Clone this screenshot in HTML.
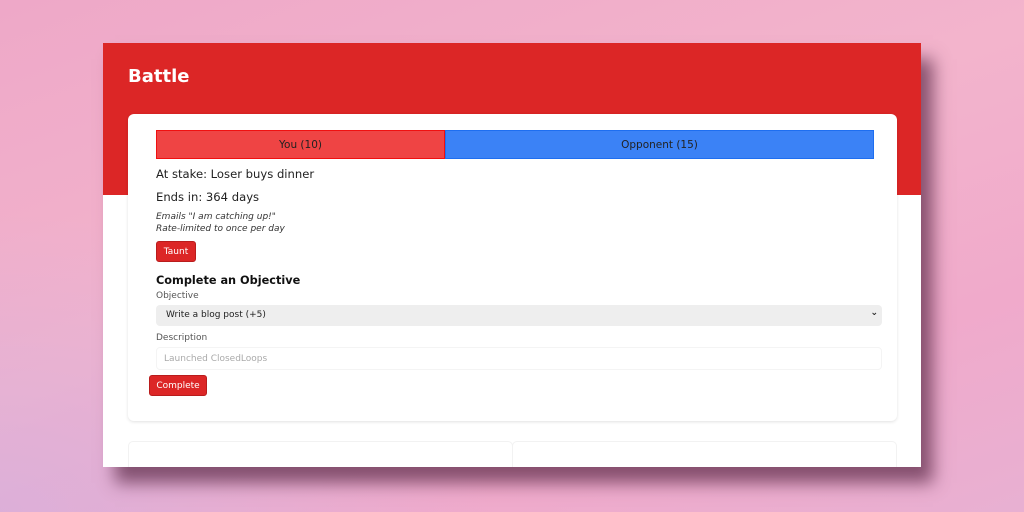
<!DOCTYPE html>
<html><head><meta charset="utf-8"><style>
*{box-sizing:border-box;margin:0;padding:0}
html,body{width:1024px;height:512px;overflow:hidden}
body{background:linear-gradient(160deg,#eea8c8 0%,#f3b4cc 45%,#f0aacb 75%,#e8b0d2 100%);font-family:"DejaVu Sans","Liberation Sans",sans-serif;position:relative}
body:before{content:"";position:absolute;left:0;bottom:0;width:500px;height:300px;background:radial-gradient(ellipse at 0% 100%,rgba(215,175,220,.8),rgba(215,175,220,0) 70%)}
.win{position:absolute;left:103px;top:43px;width:818px;height:424px;background:#fff;overflow:hidden;box-shadow:12px 16px 16px rgba(90,40,70,.7)}
.hdr{position:absolute;left:0;top:0;width:100%;height:152px;background:#dc2626}
.hdr h1{position:absolute;left:25px;top:23px;color:#fff;font-size:18px;font-weight:bold}
.card{position:absolute;left:25px;top:71px;width:769px;height:307px;background:#fff;border-radius:6px;box-shadow:0 1px 3px rgba(0,0,0,.12)}
.bar{position:absolute;left:28px;top:16px;width:718px;height:29px;display:flex;font-size:10.5px;color:#222}
.bar .a{width:289px;background:#ef4444;border:1px solid #f01010;display:flex;align-items:center;justify-content:center}
.bar .b{flex:1;background:#3b82f6;border:1px solid #1e6ef0;display:flex;align-items:center;justify-content:center}
.t{position:absolute;left:28px;font-size:11.6px;color:#222}
.i{position:absolute;left:28px;font-size:9px;font-style:italic;color:#333}
.btn{position:absolute;background:#dc2626;color:#fff;font-size:9px;border-radius:3px;border:1px solid #b91c1c;display:flex;align-items:center;justify-content:center}
.lbl{position:absolute;left:28px;font-size:9px;color:#555}
.sel{position:absolute;left:28px;top:191px;width:726px;height:21px;background:#eee;border-radius:4px;font-size:9px;color:#222;padding:5px 10px}
.sel span{position:absolute;right:4px;top:3px;font-size:9px;font-weight:bold}
.inp{position:absolute;left:28px;top:233px;width:726px;height:23px;border:1px solid #f4f4f4;border-radius:4px;font-size:9px;color:#aaa;padding:6px 7px}
.low{position:absolute;top:398px;height:40px;background:#fff;border:1px solid #f2f2f2;border-radius:5px}
</style></head><body>
<div class="win">
 <div class="hdr"><h1>Battle</h1></div>
 <div class="card">
  <div class="bar"><div class="a">You (10)</div><div class="b">Opponent (15)</div></div>
  <div class="t" style="top:53px">At stake: Loser buys dinner</div>
  <div class="t" style="top:76px">Ends in: 364 days</div>
  <div class="i" style="top:98px">Emails "I am catching up!"</div>
  <div class="i" style="top:110px">Rate-limited to once per day</div>
  <div class="btn" style="left:28px;top:127px;width:40px;height:21px">Taunt</div>
  <div class="t" style="top:160px;font-weight:bold;font-size:11.3px;color:#111">Complete an Objective</div>
  <div class="lbl" style="top:177px">Objective</div>
  <div class="sel">Write a blog post (+5)<span>⌄</span></div>
  <div class="lbl" style="top:219px">Description</div>
  <div class="inp">Launched ClosedLoops</div>
  <div class="btn" style="left:21px;top:261px;width:58px;height:21px">Complete</div>
 </div>
 <div class="low" style="left:25px;width:385px"></div>
 <div class="low" style="left:409px;width:385px"></div>
</div>
</body></html>
